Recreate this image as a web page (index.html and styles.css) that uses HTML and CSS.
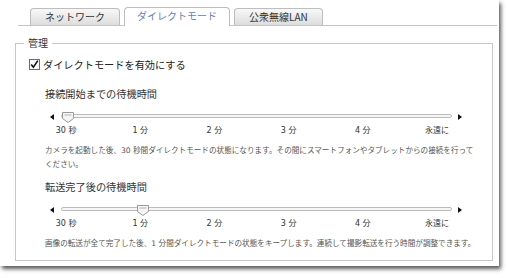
FILE: index.html
```html
<!DOCTYPE html>
<html lang="ja">
<head>
<meta charset="UTF-8">
<title>ダイレクトモード</title>
<link rel="stylesheet" href="styles.css">
</head>
<body>
  <div class="window">
    <div class="tabs">
      <div class="tab">ネットワーク</div>
      <div class="tab active">ダイレクトモード</div>
      <div class="tab">公衆無線LAN</div>
    </div>

    <fieldset class="panel">
      <legend>管理</legend>
      <label class="check">
        <span class="box">
          <svg width="11" height="11" viewBox="0 0 11 11">
            <rect x="0.5" y="0.5" width="10" height="10" fill="#fafafa" stroke="#6b6b6b"/>
            <path d="M2.2 5.4 L4.4 8.2 L8.8 1.6" fill="none" stroke="#111" stroke-width="1.6"/>
          </svg>
        </span>
        ダイレクトモードを有効にする
      </label>

      <div class="setting">
        <h3>接続開始までの待機時間</h3>
        <div class="slider">
          <span class="arrow left"></span>
          <div class="track">
            <span class="thumb" style="--v: 0">
              <svg width="12" height="11" viewBox="0 0 12 11">
                <path d="M0.5 0.5 H11.5 V6.5 L6 10.5 L0.5 6.5 Z" fill="#f4f4f4" stroke="#9a9a9a"/>
                <path d="M2.5 3 H9.5" stroke="#b5b5b5"/>
              </svg>
            </span>
          </div>
          <span class="arrow right"></span>
        </div>
        <div class="scale">
          <span>30 秒</span><span>1 分</span><span>2 分</span><span>3 分</span><span>4 分</span><span>永遠に</span>
        </div>
        <p class="desc">カメラを起動した後、30 秒間ダイレクトモードの状態になります。その間にスマートフォンやタブレットからの接続を行って<br>ください。</p>
      </div>

      <div class="setting">
        <h3>転送完了後の待機時間</h3>
        <div class="slider">
          <span class="arrow left"></span>
          <div class="track">
            <span class="thumb" style="--v: 1">
              <svg width="12" height="11" viewBox="0 0 12 11">
                <path d="M0.5 0.5 H11.5 V6.5 L6 10.5 L0.5 6.5 Z" fill="#f4f4f4" stroke="#9a9a9a"/>
                <path d="M2.5 3 H9.5" stroke="#b5b5b5"/>
              </svg>
            </span>
          </div>
          <span class="arrow right"></span>
        </div>
        <div class="scale">
          <span>30 秒</span><span>1 分</span><span>2 分</span><span>3 分</span><span>4 分</span><span>永遠に</span>
        </div>
        <p class="desc">画像の転送が全て完了した後、1 分間ダイレクトモードの状態をキープします。連続して撮影転送を行う時間が調整できます。</p>
      </div>
    </fieldset>
  </div>
</body>
</html>
```

FILE: styles.css
```css
html,
body {
  height: 100%;
}
body {
  margin: 0;
  background: #fff;
  font-family: "DejaVu Sans", "Noto Sans CJK JP", sans-serif;
  color: #333;
}
.window {
  display: flow-root;
  box-sizing: border-box;
  width: 499px;
  height: 266px;
  background: #fff;
  box-shadow: 2px 3px 4px rgba(0, 0, 0, 0.65);
}
.tabs {
  display: flex;
  align-items: flex-end;
  gap: 4px;
  margin: 0 2px 0 18px;
  padding: 7px 0 0 12px;
  border-bottom: 1px solid #c4c4c4;
  height: 18px;
}
.tab {
  box-sizing: border-box;
  height: 17px;
  padding: 0 14px;
  border: 1px solid #bdbdbd;
  border-bottom: none;
  border-radius: 4px 4px 0 0;
  background: linear-gradient(#f8f8f8, #dddddd);
  font-family: "Noto Sans CJK JP", sans-serif;
  font-size: 10px;
  line-height: 16px;
  color: #333;
}
.tab.active {
  height: 19px;
  margin-bottom: -1px;
  padding: 0 12px;
  background: #fff;
  color: #6a80b0;
}
.panel {
  margin: 10px 6px 0 15px;
  padding: 0 0 9px;
  border: 1px solid #c8c8c8;
}
.panel legend {
  margin-left: 8px;
  padding: 0 4px;
  font-family: "Noto Sans CJK JP", sans-serif;
  font-size: 10px;
  line-height: 14px;
  color: #333;
}
.check {
  display: flex;
  align-items: center;
  gap: 3px;
  margin: 7px 0 16px 13px;
  height: 14px;
  font-family: "Noto Sans CJK JP", sans-serif;
  font-size: 10.2px;
  color: #222;
}
.check .box {
  display: flex;
}
.setting + .setting {
  margin-top: 8px;
}
.setting h3 {
  margin: 0 0 10px 29px;
  font-family: "Noto Sans CJK JP", sans-serif;
  font-weight: normal;
  font-size: 10.2px;
  line-height: 14px;
  color: #333;
}
.slider {
  display: flex;
  align-items: center;
  height: 12px;
  margin-left: 34px;
}
.arrow {
  width: 0;
  height: 0;
  border-top: 3px solid transparent;
  border-bottom: 3px solid transparent;
}
.arrow.left {
  border-right: 4px solid #111;
  margin-right: 7px;
}
.arrow.right {
  border-left: 4px solid #111;
  margin-left: 6px;
}
.track {
  position: relative;
  box-sizing: border-box;
  width: 391px;
  height: 4px;
  margin-top: -2px;
  border: 1px solid #bcbcbc;
  border-radius: 2px;
  background: #f6f6f6;
}
.thumb {
  position: absolute;
  top: -3px;
  left: calc(var(--v) * 75px);
  display: flex;
}
.scale {
  display: grid;
  grid-template-columns: repeat(6, 1fr);
  width: 445px;
  margin: 2px 0 0 13px;
  font-size: 8px;
  line-height: 12px;
  color: #333;
  text-align: center;
}
.desc {
  margin: 7px 0 0 29px;
  font-size: 7.6px;
  line-height: 14px;
  color: #555;
  white-space: nowrap;
}
```
